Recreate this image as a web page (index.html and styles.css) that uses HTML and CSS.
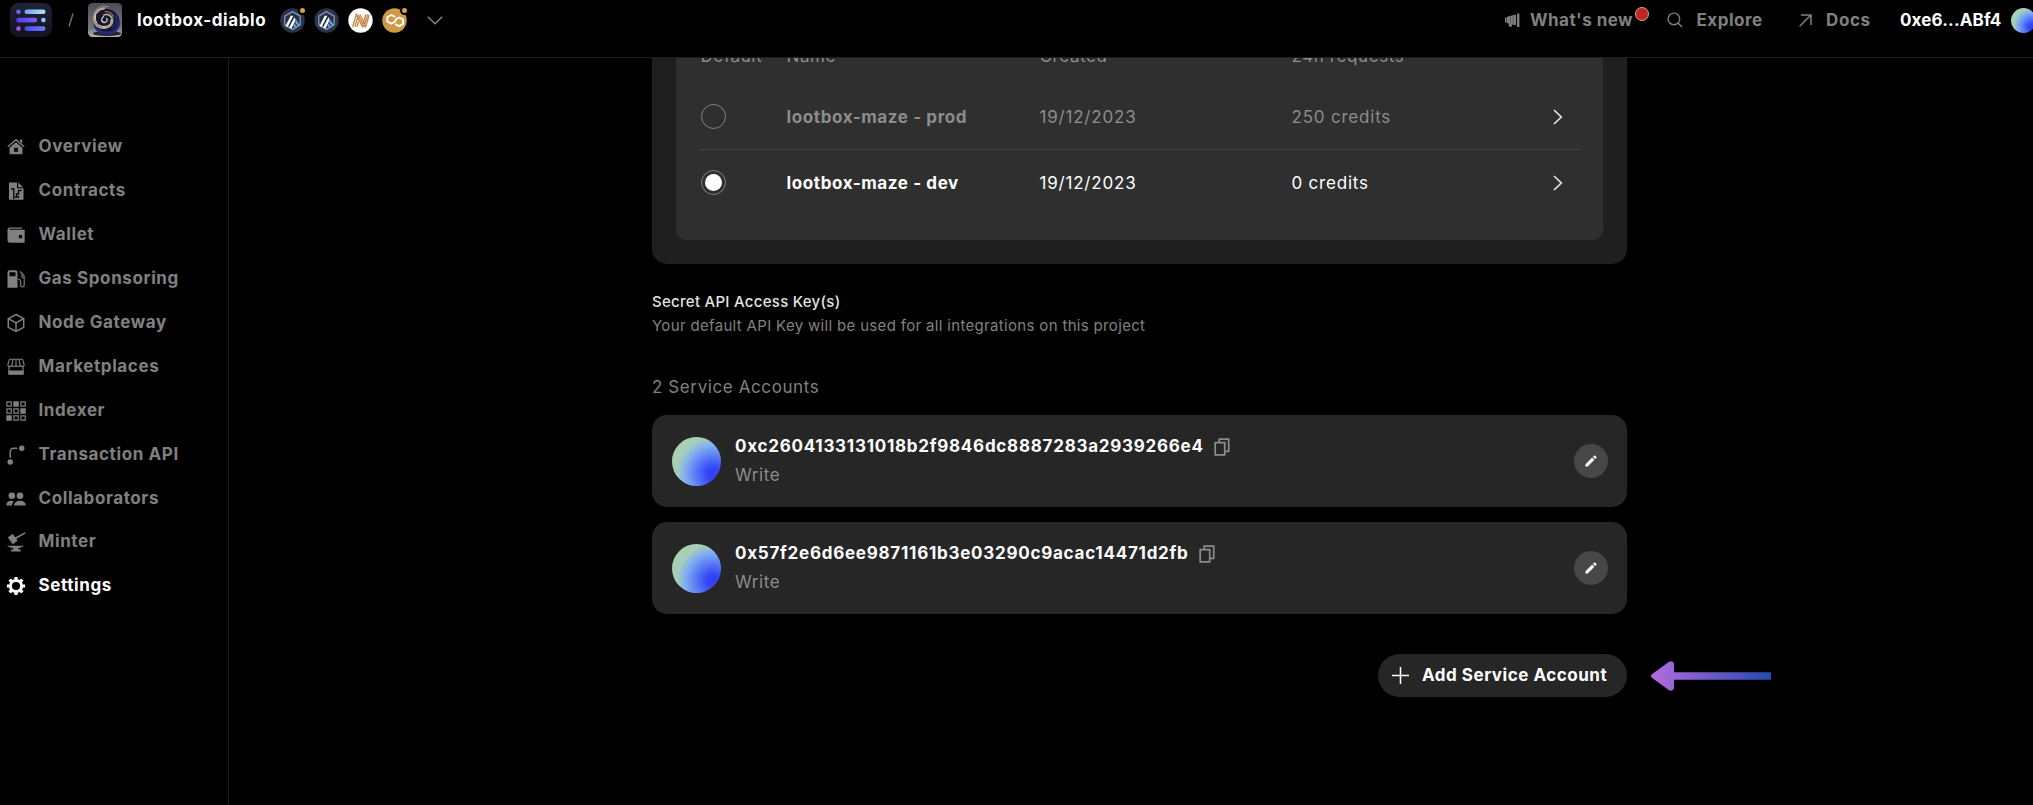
FILE: index.html
```html
<!DOCTYPE html>
<html lang="en">
<head>
<meta charset="utf-8">
<title>lootbox-diablo – Settings</title>
<link rel="stylesheet" href="styles.css">
</head>
<body>
<header class="topbar">
  <svg class="logo" viewBox="0 0 42 34">
    <defs>
      <linearGradient id="lg-bg" x1="0" y1="0" x2="0" y2="1"><stop offset="0" stop-color="#1f2337"/><stop offset="1" stop-color="#11131e"/></linearGradient>
      <linearGradient id="lg-a"><stop offset="0" stop-color="#6fa3f2"/><stop offset="1" stop-color="#b4e1fb"/></linearGradient>
      <linearGradient id="lg-b"><stop offset="0" stop-color="#4a3ff0"/><stop offset="1" stop-color="#8759f0"/></linearGradient>
      <linearGradient id="lg-c"><stop offset="0" stop-color="#3f4cf0"/><stop offset="1" stop-color="#7376f2"/></linearGradient>
    </defs>
    <rect width="42" height="34" rx="8.5" fill="url(#lg-bg)"/>
    <circle cx="8.5" cy="8.8" r="2.3" fill="#6068f2"/>
    <rect x="14.5" y="6.5" width="21" height="4.6" rx="2.3" fill="url(#lg-a)"/>
    <rect x="6.2" y="14.8" width="21" height="4.6" rx="2.3" fill="url(#lg-b)"/>
    <circle cx="33.4" cy="17.1" r="2.3" fill="#8cc6f5"/>
    <circle cx="8.5" cy="25.6" r="2.3" fill="#a453dd"/>
    <rect x="14.5" y="23.3" width="21" height="4.6" rx="2.3" fill="url(#lg-c)"/>
  </svg>
  <svg class="slash" viewBox="0 0 6 14"><path d="M5 .5 1 13.5" stroke="#777" stroke-width="1.3"/></svg>
  <svg class="project-art" viewBox="0 0 34 34">
    <defs><linearGradient id="art" x1="0" y1="0" x2="0" y2="1"><stop offset="0" stop-color="#4b4c54"/><stop offset=".75" stop-color="#77777f"/><stop offset="1" stop-color="#b5b5bb"/></linearGradient><clipPath id="artclip"><rect width="34" height="34" rx="4.5"/></clipPath></defs>
    <g clip-path="url(#artclip)" fill="none" stroke-linecap="round">
      <rect width="34" height="34" fill="url(#art)"/>
      <ellipse cx="19" cy="30.500" rx="14" ry="2.500" fill="#24242b"/>
      <ellipse cx="18.500" cy="18.500" rx="13" ry="12.500" fill="#15182e"/>
      <path d="M6.500 12C6 5 13 1.500 21 3.500c-5 0-9 2-11 6z" fill="#6f6a6b" stroke="#988d83" stroke-width=".8"/>
      <path d="M7 23c2 5 6 7 12 7 7 0 11-4 12-10" stroke="#252b78" stroke-width="2.800"/>
      <path d="M28 12c2 6 0 10-4 13M25 11c1.500 5 0 8-3 11" stroke="#272d72" stroke-width="1.500"/>
      <path d="M16 5.500C9 6 5.500 11 6 16.500 6.500 22 11 25.500 16.500 25c6-.5 9-5 7.500-9.500C23 12 19 10.500 16 12" stroke="#b7a28d" stroke-width="1.900"/>
      <path d="M7.500 12.500C6.500 19 10 23.500 16 23.500c5 0 7.500-3 7-6.500" stroke="#efe0cf" stroke-width="1"/>
      <path d="M15.500 13.500c-3 2-2 6 1 6 2.500 0 3.500-2.500 2-4" stroke="#dbc8b2" stroke-width="1.300"/>
      <path d="M17 8.500c4 0 7 1.500 8 5" stroke="#8e7a6b" stroke-width="1.200"/>
    </g>
  </svg>
  <span class="project">lootbox-diablo</span>
  <div class="chains">
    <span class="chain"><svg viewBox="0 0 25 25"><use href="#arbitrum"/></svg><i class="badge"></i></span>
    <span class="chain"><svg viewBox="0 0 25 25"><use href="#arbitrum"/></svg></span>
    <span class="chain"><svg viewBox="0 0 25 25"><circle cx="12.500" cy="12.500" r="12.200" fill="#fff"/><g stroke="#c58748" stroke-width="1.300" fill="none"><path d="M4.700 18.800 8.300 6.500l6 12L17.800 6.500M6.900 18.800l3-10M10 6.500l6 12 3.700-12M9 18.800l1.600-5.300M12 6.500l5.800 12 3.500-12"/></g></svg></span>
    <span class="chain"><svg viewBox="0 0 25 25"><circle cx="12.500" cy="12.500" r="12.200" fill="#cf9a45"/><path d="m13.300 8.300-3.800-2-4.200 2v4.500l4 2.200 3.200-1.700 1.800-3 3-1.500 3.800 2v4.500l-3.900 2.200-4-2" fill="none" stroke="#fff" stroke-width="1.900" stroke-linejoin="round" transform="translate(0 .7)"/></svg><i class="badge"></i></span>
  </div>
  <svg class="chev-down" viewBox="0 0 16 9"><path d="m.8.8 7.2 7 7.2-7" fill="none" stroke="#858585" stroke-width="1.500"/></svg>
  <nav class="toplinks">
    <a class="top-news"><svg class="ic-news" viewBox="0 0 15 15"><path d="M0 4.500h1.600v5H0zM2 3.800 11 1.500v10.800l-4.200-1v2.800l-3-.8V10.500L2 10zM12 .5h2.400v13.400H12z" fill="#808080"/><path d="M5.500 3.500v7M8.200 3v8" stroke="#333" stroke-width=".5"/></svg><span>What's new</span><i class="dot"></i></a>
    <a class="top-explore"><svg class="ic-search" viewBox="0 0 16 16"><circle cx="6.900" cy="6.900" r="5.800" fill="none" stroke="#808080" stroke-width="1.400"/><path d="m11 11 4 4" stroke="#808080" stroke-width="1.500"/></svg><span>Explore</span></a>
    <a class="top-docs"><svg class="ic-out" viewBox="0 0 13 13"><path d="M2 1h10v10M12 1 .7 12.300" fill="none" stroke="#808080" stroke-width="1.500"/></svg><span>Docs</span></a>
    <span class="account">0xe6...ABf4</span>
    <span class="orb orb-small"></span>
  </nav>
</header>
<svg class="symbols"><defs>
  <symbol id="arbitrum" viewBox="0 0 25 25">
    <circle cx="12.500" cy="12.500" r="12.200" fill="#2a3347"/>
    <path d="m12.500 3.600 7.700 4.500v8.800l-7.700 4.500-7.700-4.500V8.100z" fill="#263147" stroke="#8497ae" stroke-width="1.300"/>
    <path d="m5.500 18 5.200-10.200h2.600L7.500 19.200zM9 19.800l5.500-10.600 1.200 2.500-4.200 8.800z" fill="#fff"/>
    <path d="m15 14.200 1.400-2.500 3.300 5.500-1.500 1.200zM13.200 17.500l1.300-2.300 2.600 4-1.500.9z" fill="#6f9fe6"/>
  </symbol>
  <symbol id="copy" viewBox="0 0 16 18"><path d="M5.200 4.200V1.200H14.700v12.100H11M1.200 4.700h9.500v12.100H1.200z" fill="none" stroke="#8c8c8c" stroke-width="1.700"/></symbol>
  <symbol id="pencil" viewBox="0 0 12 12"><path d="M.5 9.300 7.200 2.600l2.200 2.200-6.700 6.700H.5zM8 1.800 9.300.5h.6l1.600 1.600v.6L10.200 4z" fill="#fff"/></symbol>
  <symbol id="next" viewBox="0 0 10 16"><path d="m1 1 7.300 7L1 15" fill="none" stroke="#e2e2e2" stroke-width="1.700"/></symbol>
</defs></svg>
<div class="shell">
  <nav class="sidebar">
    <a class="item"><svg viewBox="0 0 20 20"><path d="m1.800 9.800 8.200-7 8.200 7" fill="none" stroke="currentColor" stroke-width="1.500"/><path d="M14 2.500h2.200v4L14 4.800z" fill="currentColor"/><path fill-rule="evenodd" d="m10 5.200 6.500 5.500v6.500h-13v-6.500zM8 10.800v4h4v-4z" fill="currentColor"/></svg>Overview</a>
    <a class="item"><svg viewBox="0 0 20 20"><path fill="currentColor" d="M3 1.500h8v5.700h6.500v11.600H3zM12.200 1.500l5 4.700h-5z"/><path d="M5.200 8h2.600v10M15.500 9.500h-3v3.500h-2v3M9 16h3.500v-1" stroke="#000" stroke-width="1.300" fill="none"/></svg>Contracts</a>
    <a class="item"><svg viewBox="0 0 20 20"><path fill="currentColor" fill-rule="evenodd" d="M4 2.500h12v1.300H3.500v1h15.200v13H4A2.500 2.500 0 0 1 1.500 15.300V5A2.500 2.500 0 0 1 4 2.500zM14.500 9.700a1.900 1.900 0 1 0 0 3.800 1.900 1.900 0 0 0 0-3.800z"/></svg>Wallet</a>
    <a class="item"><svg viewBox="0 0 20 20"><path fill="currentColor" fill-rule="evenodd" d="M3.500 1.200h6a2 2 0 0 1 2 2v15.600h-10V3.200a2 2 0 0 1 2-2zM3.500 3.200v4h6v-4z"/><path d="M14 2.500 18.200 7v9.300c0 2.200-3.600 2.200-3.600 0v-4.100c0-1.500-1-2-2.600-2M18 9c-2.300.3-3.200-2.800-1.200-3.500" fill="none" stroke="currentColor" stroke-width="1.100"/></svg>Gas Sponsoring</a>
    <a class="item"><svg viewBox="0 0 20 20"><path d="m10 1.500 7.700 4.200v8.600L10 18.500l-7.700-4.200V5.700zM2.300 5.700 10 10l7.700-4.300M10 10v8.500" fill="none" stroke="currentColor" stroke-width="1.500"/></svg>Node Gateway</a>
    <a class="item"><svg viewBox="0 0 20 20"><path d="M3.600 2.200h12.800l1.800 5.400c0 2.700-3.700 2.700-4.100.2-.4 2.500-3.700 2.500-4.100 0-.4 2.500-3.700 2.500-4.100 0-.4 2.500-4.100 2.500-4.100-.2zM7 2.200l-1 6M10 2.200v6M13 2.200l1 6M3 9v8M17 9v8" fill="none" stroke="currentColor" stroke-width="1.100"/><path d="M2.300 13.500h15.400v4.300H2.300z" fill="currentColor"/></svg>Marketplaces</a>
    <a class="item"><svg viewBox="0 0 20 20"><path fill="none" stroke="currentColor" stroke-width="1.200" d="M.9.900h4.300v4.300H.9zM14.900.9h4.300v4.300h-4.300zM.9 7.900h4.300v4.300H.9zM7.900 7.900h4.300v4.300H7.900zM7.900 14.900h4.300v4.300H7.900zM14.900 14.900h4.300v4.300h-4.300z"/><path fill="currentColor" d="M7.300.3h5.500v5.500H7.300zM14.300 7.300h5.500v5.500h-5.500zM.3 14.300h5.500v5.500H.3z"/></svg>Indexer</a>
    <a class="item"><svg viewBox="0 0 20 20"><circle cx="4.200" cy="17" r="2.700" fill="currentColor"/><circle cx="15.800" cy="3.300" r="2.700" fill="currentColor"/><path d="M4.200 12.800V7c0-2.400 1.500-3.700 3.700-3.700h3.400" fill="none" stroke="currentColor" stroke-width="1.500"/></svg>Transaction API</a>
    <a class="item"><svg viewBox="0 0 20 20"><g fill="currentColor"><circle cx="5.800" cy="6.800" r="3.300"/><circle cx="14" cy="6.800" r="3.300"/><path d="M.2 16.500c0-3 2-4.800 5-4.800 1 0 2 .2 2.900.6-1.400 1-2 2.500-2 4.200zM8 16.500c0-3 2.700-4.800 6-4.800s5.900 1.800 5.900 4.800z"/></g></svg>Collaborators</a>
    <a class="item"><svg viewBox="0 0 20 20"><path fill="currentColor" d="m1.800 5.500 4.800-3.700 5 7-4.800 3.500zM9 5.500l9.800-5.200.7 1.300L10 6.900zM.8 13.700h17.500l-3.500 1.900-2.300.4v1.500h2.200v2H5.100v-2h2.200V16L4 15.600z"/></svg>Minter</a>
    <a class="item active"><svg viewBox="0 0 20 20"><circle cx="10" cy="10" r="5.600" fill="none" stroke="currentColor" stroke-width="3"/><path stroke="currentColor" stroke-width="3.200" d="M10 .9v3M10 16.100v3M.9 10h3M16.100 10h3M3.600 3.600l2 2M14.400 14.400l2 2M3.600 16.400l2-2M14.400 5.600l2-2"/></svg>Settings</a>
  </nav>
  <main class="content">
    <section class="keys">
      <div class="keys-table">
        <div class="row head"><span>Default</span><span>Name</span><span>Created</span><span>24h requests</span></div>
        <div class="row muted"><span><i class="radio"></i></span><b>lootbox-maze - prod</b><span>19/12/2023</span><span>250 credits</span><svg class="next"><use href="#next"/></svg></div>
        <div class="row"><span><i class="radio checked"></i></span><b>lootbox-maze - dev</b><span>19/12/2023</span><span>0 credits</span><svg class="next"><use href="#next"/></svg></div>
      </div>
    </section>
    <h2 class="title">Secret API Access Key(s)</h2>
    <p class="desc">Your default API Key will be used for all integrations on this project</p>
    <p class="count">2 Service Accounts</p>
    <article class="card">
      <span class="orb"></span>
      <div class="who"><div class="addr"><span>0xc2604133131018b2f9846dc8887283a2939266e4</span><svg class="copy"><use href="#copy"/></svg></div><div class="role">Write</div></div>
      <button class="edit" aria-label="Edit"><svg><use href="#pencil"/></svg></button>
    </article>
    <article class="card">
      <span class="orb"></span>
      <div class="who"><div class="addr"><span>0x57f2e6d6ee9871161b3e03290c9acac14471d2fb</span><svg class="copy"><use href="#copy"/></svg></div><div class="role">Write</div></div>
      <button class="edit" aria-label="Edit"><svg><use href="#pencil"/></svg></button>
    </article>
    <div class="actions">
      <button class="add"><svg viewBox="0 0 18 18"><path d="M9 0v18M0 9h18" stroke="#fff" stroke-width="1.600"/></svg><span>Add Service Account</span></button>
      <svg class="pointer" viewBox="0 0 120 30"><defs><linearGradient id="ptr" gradientUnits="userSpaceOnUse" x1="0" y1="0" x2="120" y2="0"><stop offset="0" stop-color="#b56be0"/><stop offset="1" stop-color="#2549ad"/></linearGradient></defs><path d="M1.200 13 17 1.500C20-.8 23 .5 23 3.500V11.200h97v7.600H23v7.700c0 3-3 4.300-6 2L1.200 17c-1.600-1.200-1.600-2.800 0-4z" fill="url(#ptr)"/></svg>
    </div>
  </main>
</div>
</body>
</html>
```
FILE: styles.css
```css
* { box-sizing: border-box; }
body {
  margin: 0;
  height: 805px;
  overflow: hidden;
  background: #000;
  color: #fff;
  font: 400 17px/22px Inter, "Liberation Sans", sans-serif;
  letter-spacing: .6px;
  display: flex;
  flex-direction: column;
}
svg { display: block; flex: none; overflow: visible; }
h2, p { margin: 0; }
button { border: 0; padding: 0; font: inherit; letter-spacing: inherit; color: inherit; }
.symbols { position: absolute; width: 0; height: 0; }

.topbar {
  flex: none;
  height: 58px;
  padding: 0 0 17px 10px;
  border-bottom: 1px solid #1c1c1c;
  display: flex;
  align-items: center;
  font-weight: 650;
}
.logo { width: 42px; height: 34px; }
.slash { width: 6px; height: 14px; margin: 0 14px 0 16px; }
.project-art { width: 34px; height: 34px; }
.project { margin-left: 15px; width: 143px; white-space: nowrap; letter-spacing: .6px; }
.chains { display: flex; gap: 9px; }
.chain { position: relative; width: 25px; height: 25px; }
.badge { position: absolute; right: -2px; top: -2px; width: 9px; height: 9px; border: 2px solid #000; border-radius: 50%; background: #d3a443; }
.chev-down { width: 16px; height: 9px; margin-left: 20px; }
.toplinks { margin-left: auto; margin-right: -3px; display: flex; align-items: center; color: #808080; white-space: nowrap; }
.toplinks a { display: flex; align-items: center; position: relative; }
.top-news { width: 162px; gap: 10px; letter-spacing: .45px; }
.ic-news { width: 15px; height: 15px; }
.dot { position: absolute; left: 130px; top: -2px; width: 14px; height: 14px; border-radius: 50%; background: #bd271d; border: 1px solid #d9a19c; }
.top-explore { width: 132px; gap: 13.500px; letter-spacing: .5px; }
.ic-search { width: 16px; height: 16px; }
.top-docs { width: 101px; gap: 14px; }
.ic-out { width: 13px; height: 13px; }
.account { width: 111px; color: #fff; letter-spacing: .15px; }

.orb { flex: none; width: 49px; height: 49px; border-radius: 50%; background: radial-gradient(circle at 84% 75%, #323cf6 0, #3547f6 12%, #6a91f5 40%, #82aef0 51%, #a5cdbb 65%, #a8d2ad 82%); }
.orb-small { width: 25px; height: 25px; }

.shell { flex: 1; min-height: 0; display: flex; }
.sidebar { flex: none; width: 229px; padding: 66.500px 0 0 6px; border-right: 1px solid #1c1c1c; display: flex; flex-direction: column; color: #808080; font-weight: 650; letter-spacing: .6px; }
.item { height: 43.9px; display: flex; align-items: center; gap: 12.500px; }
.item svg { width: 20px; height: 20px; margin-top: 2px; }
.active { color: #fff; }

.content { width: 975px; margin-left: 423px; }
.keys { height: 205.500px; padding: 0 24px 24px; background: #1f1f1f; border-radius: 0 0 15px 15px; }
.keys-table { height: 181.500px; padding: 0 24px; background: #2f2f2f; border-radius: 0 0 10px 10px; overflow: hidden; }
.row { height: 66px; display: grid; grid-template-columns: 86px 253px 252px 261px 1fr; padding-left: .5px; align-items: center; border-bottom: 1px solid #454545; }
.row b { font-weight: 650; }
.row span { letter-spacing: .8px; }
.row:last-child { height: 65px; border: 0; }
.head { height: 26px; align-items: start; border: 0; color: #8c8c8c; }
.row.head span { margin-top: -13px; letter-spacing: .6px; }
.muted { color: #8c8c8c; }
.radio { display: block; width: 25px; height: 25px; border: 1px solid #808080; border-radius: 50%; }
.checked { padding: 3px; background: #fff content-box; }
.next { width: 10px; height: 16px; }

.title { margin-top: 27.500px; font-size: 15px; line-height: 22px; font-weight: 550; color: #e3e3e3; letter-spacing: .28px; }
.desc { margin-top: 2px; font-size: 15px; line-height: 22px; color: #808080; letter-spacing: .33px; }
.count { margin-top: 39px; margin-bottom: 17px; line-height: 22px; color: #808080; }
.card { height: 92px; margin-bottom: 15px; padding: 0 19px 0 19.500px; display: flex; align-items: center; border-radius: 15px; background: #262626; }
.who { margin: -1px 0 0 14.500px; flex: 1; }
.addr { display: flex; align-items: center; gap: 10px; font-weight: 650; white-space: nowrap; letter-spacing: .75px; }
.copy { width: 16px; height: 18px; margin-top: 2px; }
.role { margin-top: 7px; color: #8c8c8c; }
.edit { width: 34px; height: 34px; border-radius: 50%; background: #474747; display: grid; place-items: center; }
.edit svg { width: 12px; height: 12px; }
.actions { position: relative; margin-top: 40px; display: flex; justify-content: flex-end; }
.add { width: 249px; height: 43px; padding-left: 14px; border-radius: 22px; background: #262626; display: flex; align-items: center; gap: 13px; font-weight: 650; letter-spacing: .52px; white-space: nowrap; }
.add svg { width: 17px; height: 17px; }
.add span { margin-top: -2px; }
.pointer { position: absolute; left: 999px; top: 7px; width: 120px; height: 30px; }
```
